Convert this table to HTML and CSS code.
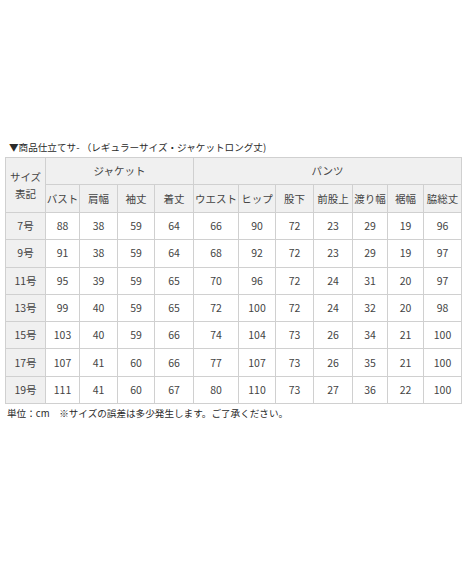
FILE: index.html
```html
<!DOCTYPE html>
<html lang="ja">
<head>
<meta charset="utf-8">
<link rel="stylesheet" href="styles.css">
</head>
<body>
<div class="wrap">
  <p class="title">▼商品仕立てサ- （レギュラーサイズ・ジャケットロング丈)</p>
  <table class="size">
    <colgroup>
      <col class="c40"><col class="c34"><col class="c38"><col class="c37"><col class="c39"><col class="c45"><col class="c37"><col class="c38"><col class="c39"><col class="c35"><col class="c36"><col class="c38">
    </colgroup>
    <thead>
      <tr class="h1">
        <th rowspan="2" class="corner">サイズ<br>表記</th>
        <th colspan="4">ジャケット</th>
        <th colspan="7">パンツ</th>
      </tr>
      <tr class="h2">
        <th>バスト</th><th>肩幅</th><th>袖丈</th><th>着丈</th><th>ウエスト</th><th>ヒップ</th><th>股下</th><th>前股上</th><th>渡り幅</th><th>裾幅</th><th>脇総丈</th>
      </tr>
    </thead>
    <tbody>
      <tr><th>7号</th><td>88</td><td>38</td><td>59</td><td>64</td><td>66</td><td>90</td><td>72</td><td>23</td><td>29</td><td>19</td><td>96</td></tr>
      <tr><th>9号</th><td>91</td><td>38</td><td>59</td><td>64</td><td>68</td><td>92</td><td>72</td><td>23</td><td>29</td><td>19</td><td>97</td></tr>
      <tr><th>11号</th><td>95</td><td>39</td><td>59</td><td>65</td><td>70</td><td>96</td><td>72</td><td>24</td><td>31</td><td>20</td><td>97</td></tr>
      <tr><th>13号</th><td>99</td><td>40</td><td>59</td><td>65</td><td>72</td><td>100</td><td>72</td><td>24</td><td>32</td><td>20</td><td>98</td></tr>
      <tr><th>15号</th><td>103</td><td>40</td><td>59</td><td>66</td><td>74</td><td>104</td><td>73</td><td>26</td><td>34</td><td>21</td><td>100</td></tr>
      <tr><th>17号</th><td>107</td><td>41</td><td>60</td><td>66</td><td>77</td><td>107</td><td>73</td><td>26</td><td>35</td><td>21</td><td>100</td></tr>
      <tr><th>19号</th><td>111</td><td>41</td><td>60</td><td>67</td><td>80</td><td>110</td><td>73</td><td>27</td><td>36</td><td>22</td><td>100</td></tr>
    </tbody>
  </table>
  <p class="note">単位：cm　※サイズの誤差は多少発生します。ご了承ください。</p>
</div>
</body>
</html>
```
FILE: styles.css
```css
html, body {
  margin: 0;
  padding: 0;
  background: #fff;
}
body {
  font-family: "Noto Sans CJK JP", "Noto Sans", sans-serif;
  color: #444;
  font-size: 10.5px;
}
.wrap {
  padding: 140px 0 0 5px;
}
.title {
  margin: 0 0 2px 4px;
  line-height: 15px;
  font-size: 9.6px;
  color: #2a2a2a;
}
.size {
  border-collapse: collapse;
  table-layout: fixed;
  width: 457px;
}
.size th, .size td {
  border: 1px solid #d0d0d0;
  padding: 0;
  text-align: center;
  font-weight: normal;
  line-height: 14px;
  height: 26.3px;
  white-space: nowrap;
}
.size thead th, .size tbody th {
  background: #f0f0f0;
}
.size .h1 th { height: 26px; }
.size .h2 th { height: 27px; }
.size .corner { line-height: 17px; }
.c40 { width: 40px; }
.c34 { width: 34px; }
.c38 { width: 38px; }
.c37 { width: 37px; }
.c39 { width: 39px; }
.c45 { width: 45px; }
.c35 { width: 35px; }
.c36 { width: 36px; }
.note {
  margin: 2px 0 0 2px;
  line-height: 14px;
  font-size: 9.6px;
  color: #2a2a2a;
}
```
